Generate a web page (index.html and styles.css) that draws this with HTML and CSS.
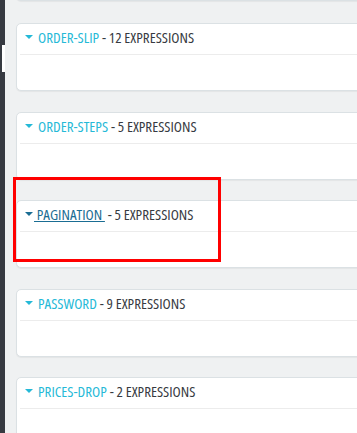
FILE: index.html
```html
<!DOCTYPE html>
<html lang="en">
<head>
  <meta charset="UTF-8" />
  <title>Translations</title>
  <link rel="stylesheet" href="styles.css">
</head>
<body>

  <div class="page">
    <aside class="sidebar">
      <span class="sidebar-mark"></span>
    </aside>

    <main class="main">
      <div class="domain-list">

        <div class="domain domain-cut">
          <div class="domain-body"></div>
        </div>

        <div class="domain">
          <div class="domain-head">
            <a href="#" class="domain-link"><span class="caret"></span><span class="title"><span class="name">ORDER-SLIP</span> - 12 EXPRESSIONS</span></a>
          </div>
          <div class="domain-body"></div>
        </div>

        <div class="domain">
          <div class="domain-head">
            <a href="#" class="domain-link"><span class="caret"></span><span class="title"><span class="name">ORDER-STEPS</span> - 5 EXPRESSIONS</span></a>
          </div>
          <div class="domain-body"></div>
        </div>

        <div class="domain">
          <div class="highlight"></div>
          <div class="domain-head">
            <a href="#" class="domain-link hover"><span class="caret"></span><span class="title"><span class="name">&nbsp;PAGINATION&nbsp;</span> - 5 EXPRESSIONS</span></a>
          </div>
          <div class="domain-body"></div>
        </div>

        <div class="domain">
          <div class="domain-head">
            <a href="#" class="domain-link"><span class="caret"></span><span class="title"><span class="name">PASSWORD</span> - 9 EXPRESSIONS</span></a>
          </div>
          <div class="domain-body"></div>
        </div>

        <div class="domain">
          <div class="domain-head">
            <a href="#" class="domain-link"><span class="caret"></span><span class="title"><span class="name">PRICES-DROP</span> - 2 EXPRESSIONS</span></a>
          </div>
          <div class="domain-body"></div>
        </div>

      </div>
    </main>
  </div>

</body>
</html>
```

FILE: styles.css
```css
body {
  margin: 0;
  font-family: "Open Sans", sans-serif;
  background: #eff1f2;
}
.page {
  display: flex;
  height: 433px;
  overflow: hidden;
}
.sidebar {
  position: relative;
  width: 5px;
  flex: none;
  background: #363a41;
}
.sidebar-mark {
  position: absolute;
  left: 2px;
  top: 45px;
  width: 3px;
  height: 27px;
  background: #fff;
}
.main {
  flex: 1;
  padding-left: 11px;
  overflow: hidden;
}
.domain-list {
  margin-top: -20px;
  width: 360px;
}
.domain {
  position: relative;
  background: #fff;
  border: 1px solid #dbe1e4;
  border-radius: 5px;
  box-shadow: 0 1px 1px rgba(0,0,0,0.05);
  margin-bottom: 20.5px;
}
.domain-cut {
  border-top: 0;
  border-radius: 0 0 5px 5px;
  margin-bottom: 22px;
}
.domain-cut .domain-body {
  height: 20px;
}
.domain-head {
  display: flex;
  align-items: center;
  box-sizing: border-box;
  height: 31px;
  margin: 0 0 0 3px;
  padding: 0 0 4px 5px;
  border-bottom: 1px solid #ececec;
}
.domain-body {
  height: 35px;
}
.domain-link {
  display: flex;
  align-items: center;
  line-height: 20px;
  color: #25b9d7;
  text-decoration: none;
}
.caret {
  width: 0;
  height: 0;
  border-left: 4px solid transparent;
  border-right: 4px solid transparent;
  border-top: 4px solid currentColor;
  margin-right: 5px;
}
.title {
  font-stretch: 75%;
  font-size: 15px;
  color: #363a41;
  white-space: nowrap;
}
.name {
  color: #25b9d7;
}
.domain-link.hover {
  color: #1a6d93;
}
.domain-link.hover .caret {
  margin-right: 1px;
}
.domain-link.hover .name {
  color: #1a6d93;
  text-decoration: underline;
}
.highlight {
  position: absolute;
  left: -4px;
  top: -24px;
  width: 208px;
  height: 85px;
  border: 3px solid #f00;
  box-sizing: border-box;
}
```
